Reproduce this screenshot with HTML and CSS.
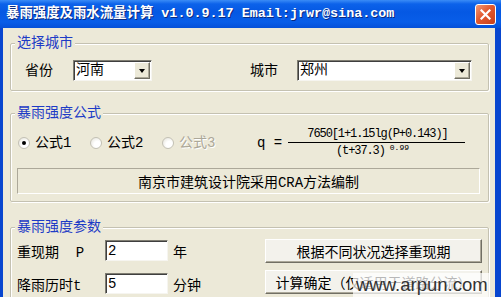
FILE: index.html
```html
<!DOCTYPE html>
<html lang="zh-CN">
<head>
    <meta charset="UTF-8">
    <title>暴雨强度及雨水流量计算</title>
    <link rel="stylesheet" href="styles.css">
</head>
<body>
<div class="window">
    <div class="titlebar">
        <span class="title">暴雨强度及雨水流量计算 v1.0.9.17 Email:jrwr@sina.com</span>
        <span class="close-btn">
            <svg width="11" height="11" viewBox="0 0 11 11"><path d="M1.5 1.5 L9.5 9.5 M9.5 1.5 L1.5 9.5" stroke="#fff" stroke-width="2.2" stroke-linecap="square"/></svg>
        </span>
    </div>

    <div class="client">
        <!-- 选择城市 -->
        <fieldset class="group group-city">
            <legend>选择城市</legend>
            <div class="city-row">
                <span class="lbl lbl-prov">省份</span>
                <div class="combo combo-prov">
                    <span class="combo-text">河南</span>
                    <span class="combo-btn"></span>
                </div>
                <span class="lbl lbl-city">城市</span>
                <div class="combo combo-city">
                    <span class="combo-text">郑州</span>
                    <span class="combo-btn"></span>
                </div>
            </div>
        </fieldset>

        <!-- 暴雨强度公式 -->
        <fieldset class="group group-formula">
            <legend>暴雨强度公式</legend>
            <div class="formula-row">
                <div class="radios">
                    <label class="radio"><span class="radio-dot checked"></span>公式1</label>
                    <label class="radio"><span class="radio-dot"></span>公式2</label>
                    <label class="radio disabled"><span class="radio-dot"></span>公式3</label>
                </div>
                <div class="formula">
                    <span class="q">q =</span>
                    <div class="frac">
                        <div class="num">7650[1+1.15lg(P+0.143)]</div>
                        <div class="den">(t+37.3)<span class="exp">0.99</span></div>
                    </div>
                </div>
            </div>
            <div class="note">南京市建筑设计院采用CRA方法编制</div>
        </fieldset>

        <!-- 暴雨强度参数 -->
        <fieldset class="group group-params">
            <legend>暴雨强度参数</legend>
            <div class="params">
                <div class="param-rows">
                    <div class="param-row">
                        <span class="param-lbl">重现期  P</span>
                        <input class="field" type="text" value="2">
                        <span class="unit">年</span>
                    </div>
                    <div class="param-row">
                        <span class="param-lbl">降雨历时t</span>
                        <input class="field" type="text" value="5">
                        <span class="unit">分钟</span>
                    </div>
                </div>
                <div class="buttons">
                    <button class="btn" type="button">根据不同状况选择重现期</button>
                    <button class="btn" type="button">计算确定（仅适用于道路分流）</button>
                </div>
            </div>
        </fieldset>
    </div>

    <div class="watermark">www.arpun.com</div>
</div>
</body>
</html>
```

FILE: styles.css
```css
* {
    box-sizing: border-box;
}
body {
    margin: 0;
    width: 501px;
    height: 297px;
    overflow: hidden;
    font-family: "Liberation Mono", "Noto Sans CJK SC", monospace;
    font-size: 14px;
    color: #000;
    background-color: #0846cf;
}
.window {
    position: relative;
    height: 297px;
    display: flex;
    flex-direction: column;
}

/* title bar */
.titlebar {
    flex: none;
    height: 28px;
    display: flex;
    align-items: center;
    justify-content: space-between;
    padding: 0 5px 0 6px;
    background: linear-gradient(#3a8cf6 0, #0c62ea 4px, #0558e3 12px, #085de8 22px, #0550d8 28px);
}
.title {
    color: #fff;
    font-weight: bold;
    font-size: 13.4px;
    line-height: 16px;
    white-space: nowrap;
    text-shadow: 1px 1px 0 #0a2a80;
}
.close-btn {
    width: 21px;
    height: 21px;
    display: flex;
    align-items: center;
    justify-content: center;
    border: 1px solid #fff;
    border-radius: 3px;
    background: linear-gradient(135deg, #f29a78 0, #e2592f 45%, #c9401a 100%);
}

/* client area */
.client {
    flex: 1;
    margin: 0 6px 0 3px;
    background-color: #ece9d8;
    overflow: hidden;
}
.group {
    margin: 0 6px 0 7px;
    padding: 0;
    min-width: 0;
    border: 1px solid #c4c1b1;
    border-radius: 2px;
    box-shadow: 1px 1px 0 #fff, inset 1px 1px 0 #fff;
}
.group legend {
    margin-left: 4px;
    padding: 0 2px;
    line-height: 16px;
    color: #1d3bc6;
    background-color: #ece9d8;
}
.group-city {
    margin-top: 7px;
}
.group-formula {
    margin-top: 14px;
}
.group-params {
    margin-top: 17px;
}

/* city row */
.city-row {
    display: flex;
    align-items: center;
    padding: 9px 0 9px 14px;
}
.lbl {
    line-height: 16px;
}
.lbl-prov {
    width: 48px;
}
.lbl-city {
    width: 47px;
    margin-left: 98px;
}
.combo {
    height: 21px;
    display: flex;
    align-items: center;
    padding: 1px 1px 1px 2px;
    background-color: #fff;
    border: 1px solid;
    border-color: #7f7d72 #f6f5f0 #f6f5f0 #7f7d72;
    box-shadow: inset 1px 1px 0 #3f3f3f;
}
.combo-prov {
    width: 79px;
}
.combo-city {
    width: 175px;
}
.combo-text {
    flex: 1;
    line-height: 17px;
}
.combo-btn {
    position: relative;
    width: 16px;
    height: 17px;
    background-color: #ece9d8;
    border: 1px solid;
    border-color: #fff #716f64 #716f64 #fff;
    box-shadow: inset -1px -1px 0 #aca899;
}
.combo-btn::after {
    content: "";
    position: absolute;
    left: 4px;
    top: 6px;
    border-left: 3.5px solid transparent;
    border-right: 3.5px solid transparent;
    border-top: 4px solid #000;
}

/* formula */
.formula-row {
    display: flex;
    align-items: center;
    height: 39px;
    padding: 5px 0 0 7px;
}
.radios {
    display: flex;
    width: 239px;
}
.radio {
    width: 72px;
    display: flex;
    align-items: center;
    gap: 5px;
    line-height: 16px;
}
.radio-dot {
    position: relative;
    width: 12px;
    height: 12px;
    border-radius: 50%;
    border: 1px solid #c3c1b5;
    background: radial-gradient(circle at 65% 65%, #fff 35%, #e2e0d5 100%);
}
.radio-dot.checked::after {
    content: "";
    position: absolute;
    left: 3px;
    top: 3px;
    width: 4px;
    height: 4px;
    border-radius: 50%;
    background-color: #000;
}
.radio.disabled {
    color: #aca899;
    text-shadow: 1px 1px 0 #fff;
}
.formula {
    display: flex;
    align-items: center;
}
.q {
    width: 31px;
    line-height: 16px;
    white-space: pre;
}
.frac {
    width: 177px;
    text-align: center;
    font-size: 12px;
    letter-spacing: -1.1px;
}
.num {
    line-height: 15px;
    padding-left: 2px;
    border-bottom: 1px solid #000;
}
.den {
    line-height: 17px;
    padding-right: 8px;
}
.exp {
    position: relative;
    top: -4px;
    margin-left: 5px;
    font-size: 8px;
    letter-spacing: 0;
}
.note {
    height: 26px;
    margin: 8px 8px 7px 6px;
    display: flex;
    align-items: center;
    justify-content: center;
    border: 1px solid;
    border-color: #aca899 #fff #fff #aca899;
}

/* parameters */
.params {
    display: flex;
    justify-content: space-between;
    padding: 4px 6px 10px 6px;
}
.param-rows {
    display: flex;
    flex-direction: column;
    gap: 12px;
    padding-top: 1px;
}
.param-row {
    display: flex;
    align-items: center;
    height: 21px;
}
.param-lbl {
    width: 88px;
    white-space: pre;
}
.field {
    width: 63px;
    height: 21px;
    padding: 0 2px;
    font: inherit;
    background-color: #fff;
    border: 1px solid;
    border-color: #7f7d72 #f6f5f0 #f6f5f0 #7f7d72;
    box-shadow: inset 1px 1px 0 #3f3f3f;
    outline: none;
}
.unit {
    margin-left: 5px;
}
.buttons {
    display: flex;
    flex-direction: column;
    gap: 7px;
}
.btn {
    width: 217px;
    height: 24px;
    padding: 0;
    font: inherit;
    color: #000;
    white-space: nowrap;
    background-color: #f3f2ec;
    border: 1px solid;
    border-color: #fff #716f64 #716f64 #fff;
    box-shadow: inset -1px -1px 0 #aca899;
}

/* site watermark over the bottom button */
.watermark {
    position: absolute;
    right: 11px;
    bottom: 0;
    width: 137px;
    height: 24px;
    padding-left: 3px;
    font-family: "Liberation Sans", sans-serif;
    font-size: 18.5px;
    line-height: 24px;
    color: #333;
    background-color: rgba(255, 255, 255, 0.72);
}
```
